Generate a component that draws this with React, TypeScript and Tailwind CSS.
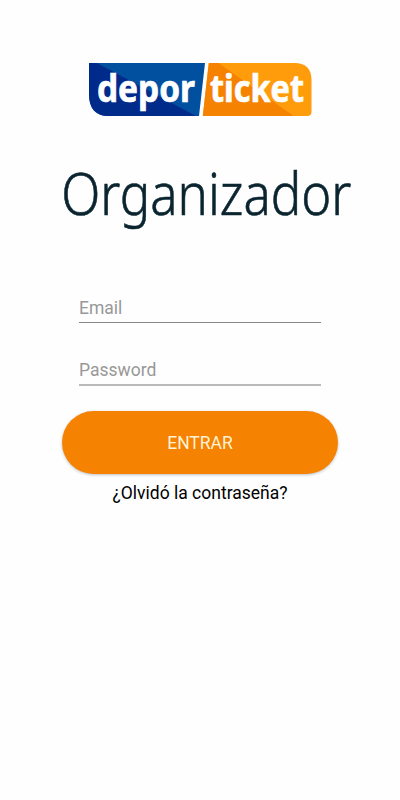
const inputClass =
  "block w-full bg-transparent pb-[2px] text-[17.5px] leading-6 text-gray-900 outline-none placeholder:text-[#989898]";

function Logo() {
  return (
    <svg
      viewBox="88 62 224 55"
      className="h-[55px] w-[224px] overflow-visible"
      role="img"
      aria-label="deporticket"
    >
      <defs>
        <clipPath id="blue">
          <path d="M89 63H205L199 116H107Q89 115 89 94Z" />
        </clipPath>
        <clipPath id="orange">
          <path d="M208.8 63H296Q311.5 64 311.5 80V112Q311.5 116 307 116H202.8Z" />
        </clipPath>
      </defs>
      <g clipPath="url(#blue)">
        <path d="M88 62H206V117H88Z" fill="#00509f" />
        <path d="M88 62H95L198 117H88Z" fill="#002b8b" />
      </g>
      <g clipPath="url(#orange)">
        <path d="M200 62H312V117H200Z" fill="#ff9c0c" />
        <path d="M200 62H217L295 117H200Z" fill="#f58200" />
      </g>
      <g
        fill="#fff"
        stroke="#fff"
        strokeWidth="0.7"
        fontFamily="'Noto Sans', 'Open Sans', sans-serif"
        fontWeight="700"
        fontSize="37"
      >
        <text x="97" y="101.5" textLength="98" lengthAdjust="spacingAndGlyphs">
          depor
        </text>
        <text x="210" y="101.5" textLength="94" lengthAdjust="spacingAndGlyphs">
          ticket
        </text>
      </g>
    </svg>
  );
}

export default function App() {
  return (
    <main className="flex min-h-screen flex-col items-center bg-[#fefefe] pt-[62px] font-['Roboto',sans-serif]">
      <Logo />

      <h1 className="mt-[36px] ml-[12px] scale-x-[0.878] font-['Noto_Sans','Open_Sans',sans-serif] text-[58px] leading-[80px] font-light text-[#0b2530] [-webkit-text-stroke:0.6px_#0b2530]">
        Organizador
      </h1>

      <form className="mt-[63px] flex w-[276px] flex-col" onSubmit={(e) => e.preventDefault()}>
        <div className="flex flex-col gap-[35px] px-[17px]">
          <input
            type="email"
            placeholder="Email"
            className={`${inputClass} border-b border-[#868686]`}
          />
          <input
            type="password"
            placeholder="Password"
            className={`${inputClass} border-b-2 border-[#bababa]`}
          />
        </div>
        <button
          type="submit"
          className="mt-[25px] h-[63px] rounded-full bg-[#f58200] pt-[2px] text-[17.5px] text-[#fff3d6] shadow-[0_1px_3px_rgba(0,0,0,0.25)]"
        >
          ENTRAR
        </button>
        <a href="#" className="mt-[7px] text-center text-[17.5px] leading-6 text-black">
          ¿Olvidó la contraseña?
        </a>
      </form>
    </main>
  );
}
